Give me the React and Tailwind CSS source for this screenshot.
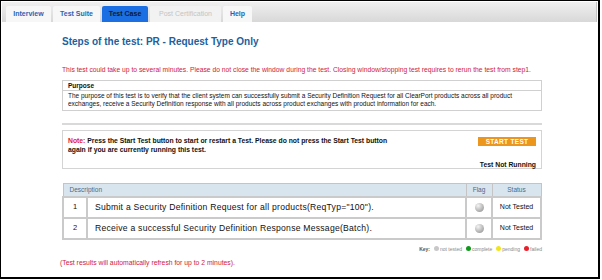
import React from 'react';

const tabs = [
  { label: 'Interview', w: 'w-[45px]' },
  { label: 'Test Suite', w: 'w-[47px]' },
  { label: 'Test Case', w: 'w-[46px]', active: true },
  { label: 'Post Certification', w: 'w-[71px]', disabled: true },
  { label: 'Help', w: 'w-[29px]' },
];

const steps = [
  { n: 1, text: 'Submit a Security Definition Request for all products(ReqTyp="100").', status: 'Not Tested' },
  { n: 2, text: 'Receive a successful Security Definition Response Message(Batch).', status: 'Not Tested' },
];

const Ball = () => (
  <span className="inline-block w-[9px] h-[9px] rounded-full bg-[radial-gradient(circle_at_35%_30%,#f4f4f4,#b4b4b4_60%,#8a8a8a)]"></span>
);

const Dot = ({ color }) => <span className={`inline-block w-[5px] h-[5px] rounded-full ${color}`}></span>;

export default function App() {
  return (
    <div className="w-[602px] h-[280px] bg-white font-['Liberation_Sans',Arial,sans-serif] overflow-hidden">
      <div className="w-[600px] h-[279px] border border-black border-r-2 border-b-2 flex flex-col">
        {/* Tab bar */}
        <div className="h-[20px] mt-[1px] mx-[1px] bg-gradient-to-b from-[#f0f0f0] to-[#d8d8d8] border-r border-[#c4c4c4] flex items-end gap-[2px] pl-[4px]">
          {tabs.map((t) => (
            <div
              key={t.label}
              className={`${t.w} h-[16px] rounded-t-[2px] flex items-center justify-center text-[7px] font-bold ${
                t.active
                  ? 'bg-[#1c6fe3] text-[#0a1a33]'
                  : t.disabled
                  ? 'bg-[#f2f2f2] text-[#c4c4c4] font-normal'
                  : 'bg-[#f7f7f7] text-[#2d63b4]'
              }`}
            >
              {t.label}
            </div>
          ))}
        </div>

        <div className="pl-[60px] w-[541px]">
          <h1 className="mt-[14px] h-[12px] leading-[12px] text-[10px] font-bold text-[#21609e] pl-[1px]">
            Steps of the test: PR - Request Type Only
          </h1>

          <p className="mt-[17px] text-[6.75px] leading-[9px] text-[#d0213a] pl-[1px] whitespace-nowrap">
            This test could take up to several minutes. Please do not close the window during the test. Closing window/stopping test requires to rerun the test from step1.
          </p>

          {/* Purpose */}
          <div className="mt-[6px] ml-[1px] border border-[#d0d0d0] text-[6.5px] text-[#111]">
            <div className="h-[10px] leading-[10px] px-[5px] font-bold border-b border-[#d0d0d0]">Purpose</div>
            <p className="px-[5px] pt-[1px] pb-[3px] leading-[7.5px]">
              The purpose of this test is to verify that the client system can successfully submit a Security Definition Request for all ClearPort products across all product exchanges, receive a Security Definition response with all products across product exchanges with product information for each.
            </p>
          </div>

          <div className="mt-[12px] ml-[1px] h-[2px] bg-[#d9d9d9]"></div>

          {/* Note */}
          <div className="mt-[5px] ml-[1px] h-[39px] border border-[#d4d4d4] flex px-[5px] pt-[5px] text-[6.8px] font-bold text-[#111]">
            <p className="w-[326px] leading-[9px]">
              <span className="text-[#e0203a]">Note:</span> Press the Start Test button to start or restart a Test. Please do not press the Start Test button again if you are currently running this test.
            </p>
            <div className="flex-1 flex flex-col items-end">
              <button className="mt-[1px] w-[58px] h-[9px] bg-[#ec961e] text-white text-[6.5px] font-bold leading-[9px] tracking-[0.3px]">
                START TEST
              </button>
              <div className="mt-[15px] leading-[8px]">Test Not Running</div>
            </div>
          </div>

          {/* Steps table */}
          <table className="mt-[14px] ml-[1px] w-[480px] border-collapse text-[#111]">
            <thead>
              <tr className="h-[13px] bg-[#d8e5ef] text-[6.5px] text-[#4d6a86]">
                <th colSpan={2} className="text-left font-normal px-[6px] border border-[#c4c4c4]">Description</th>
                <th className="w-[26px] font-normal border border-[#c4c4c4]">Flag</th>
                <th className="w-[49px] font-normal border border-[#c4c4c4]">Status</th>
              </tr>
            </thead>
            <tbody>
              {steps.map((s) => (
                <tr key={s.n} className="h-[21px]">
                  <td className="w-[24px] text-center text-[7.5px] border-2 border-[#cacaca]">{s.n}</td>
                  <td className="px-[7px] text-[8.6px] tracking-[0.25px] border-2 border-[#cacaca]">{s.text}</td>
                  <td className="text-center border-2 border-[#cacaca]">
                    <div className="flex justify-center"><Ball /></div>
                  </td>
                  <td className="text-center text-[7px] border-2 border-[#cacaca]">{s.status}</td>
                </tr>
              ))}
            </tbody>
          </table>

          {/* Key */}
          <div className="mt-[5px] flex justify-end items-center gap-[1px] text-[5px] text-[#8a8a8a] leading-[8px]">
            <span className="font-bold text-[#555] mr-[3px]">Key:</span>
            <Dot color="bg-[#c8c8c8]" /><span className="mr-[3px]">not tested</span>
            <Dot color="bg-[#0f9a1c]" /><span className="mr-[3px]">complete</span>
            <Dot color="bg-[#f0e620]" /><span className="mr-[3px]">pending</span>
            <Dot color="bg-[#e8202c]" /><span>failed</span>
          </div>
        </div>

        <p className="mt-[5px] pl-[59px] text-[6.8px] leading-[9px] text-[#d0213a]">
          (Test results will automatically refresh for up to 2 minutes).
        </p>
      </div>
    </div>
  );
}
